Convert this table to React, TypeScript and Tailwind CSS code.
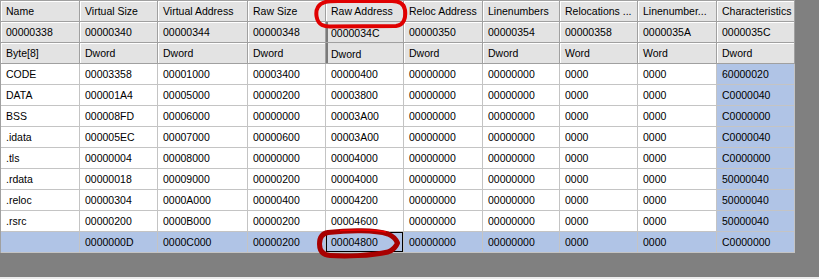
import React from "react";

const widths = [79, 78, 90, 78, 78, 79, 77, 78, 79, 78];

const headers = [
  "Name",
  "Virtual Size",
  "Virtual Address",
  "Raw Size",
  "Raw Address",
  "Reloc Address",
  "Linenumbers",
  "Relocations ...",
  "Linenumber...",
  "Characteristics",
];
const offsets = [
  "00000338",
  "00000340",
  "00000344",
  "00000348",
  "0000034C",
  "00000350",
  "00000354",
  "00000358",
  "0000035A",
  "0000035C",
];
const types = ["Byte[8]", "Dword", "Dword", "Dword", "Dword", "Dword", "Dword", "Word", "Word", "Dword"];

const rows: string[][] = [
  ["CODE", "00003358", "00001000", "00003400", "00000400", "00000000", "00000000", "0000", "0000", "60000020"],
  ["DATA", "000001A4", "00005000", "00000200", "00003800", "00000000", "00000000", "0000", "0000", "C0000040"],
  ["BSS", "000008FD", "00006000", "00000000", "00003A00", "00000000", "00000000", "0000", "0000", "C0000000"],
  [".idata", "000005EC", "00007000", "00000600", "00003A00", "00000000", "00000000", "0000", "0000", "C0000040"],
  [".tls", "00000004", "00008000", "00000000", "00004000", "00000000", "00000000", "0000", "0000", "C0000000"],
  [".rdata", "00000018", "00009000", "00000200", "00004000", "00000000", "00000000", "0000", "0000", "50000040"],
  [".reloc", "00000304", "0000A000", "00000400", "00004200", "00000000", "00000000", "0000", "0000", "50000040"],
  [".rsrc", "00000200", "0000B000", "00000200", "00004600", "00000000", "00000000", "0000", "0000", "50000040"],
  ["", "0000000D", "0000C000", "00000200", "00004800", "00000000", "00000000", "0000", "0000", "C0000000"],
];

const font = { fontFamily: "'Liberation Sans', Arial, sans-serif" };

function HeaderCell({ text, w, drag }: { text: string; w: number; drag?: boolean }) {
  return (
    <div
      className={
        "h-[21px] shrink-0 border-r border-b border-[#a0a0a0] bg-[#e3e3e3] flex items-center pl-[5px] whitespace-nowrap overflow-hidden " +
        (drag ? "shadow-[inset_2px_0_0_#7a7a7a] pt-[3px]" : "shadow-[inset_1px_1px_0_#ffffff]")
      }
      style={{ width: w }}
    >
      {text}
    </div>
  );
}

export default function App() {
  return (
    <div
      className="relative w-[819px] h-[279px] bg-[#808080] border-b-2 border-[#ececec] text-[10.5px] text-black leading-none overflow-hidden"
      style={font}
    >
      <div className="w-[795px] border-l border-t border-[#a0a0a0] bg-[#808080] flex flex-col">
        <div className="flex">
          {headers.map((h, i) => (
            <HeaderCell key={i} text={h} w={widths[i]} />
          ))}
        </div>
        <div className="flex">
          {offsets.map((h, i) => (
            <HeaderCell key={i} text={h} w={widths[i]} drag={i === 4} />
          ))}
        </div>
        <div className="flex">
          {types.map((h, i) => (
            <HeaderCell key={i} text={h} w={widths[i]} drag={i === 4} />
          ))}
        </div>
        {rows.map((r, ri) => {
          const sel = ri === rows.length - 1;
          return (
            <div key={ri} className="flex">
              {r.map((c, ci) => {
                const blue = sel || ci === 9;
                const focused = sel && ci === 4;
                return (
                  <div
                    key={ci}
                    className={
                      "h-[21px] shrink-0 border-r border-b border-[#c4c4c4] flex items-center pl-[5px] whitespace-nowrap " +
                      (blue ? "bg-[#b0c4e6] " : "bg-white ") +
                      (focused ? "shadow-[inset_0_0_0_1px_#000000]" : "")
                    }
                    style={{ width: widths[ci] }}
                  >
                    {c}
                  </div>
                );
              })}
            </div>
          );
        })}
      </div>

      <svg className="absolute left-0 top-0 pointer-events-none" width="819" height="279" viewBox="0 0 819 279">
        <path
          d="M 322 25 C 316 22 315 12 318 7 C 321 2 327 1 338 1 L 392 1 C 400 1 404 4 405 10 C 406 18 404 25 396 26 L 330 26.5 C 326 26.5 324 26 322 25 Z"
          fill="none"
          stroke="#e00000"
          strokeWidth="4"
          strokeLinejoin="round"
        />
        <path
          d="M 328 232.5 C 350 230 375 230 388 234 C 393 236 396 239 397.5 243 C 396 247 393 250 388 252 C 370 256 345 256.5 330 255.5 C 322 255 319.5 250 319.5 244 C 319.5 237 322 233.5 328 232.5 Z"
          fill="none"
          stroke="#a80000"
          strokeWidth="5"
          strokeLinejoin="round"
        />
        <path d="M 340 230.5 C 360 229.5 378 230 386 232" fill="none" stroke="#ee0000" strokeWidth="1.5" />
      </svg>
    </div>
  );
}
